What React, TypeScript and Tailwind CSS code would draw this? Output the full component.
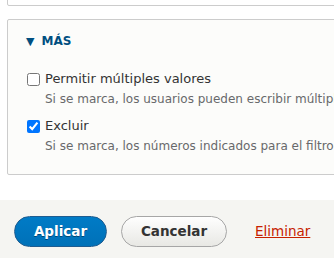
import React from 'react';

const font = { fontFamily: '"DejaVu Sans", "Liberation Sans", sans-serif' };

function CheckItem({ label, description, checked }: { label: string; description: string; checked?: boolean }) {
  return (
    <div className="flex flex-col">
      <label className="flex items-center gap-[5px] text-[13px] leading-[18px] text-[#333]">
        <input
          type="checkbox"
          defaultChecked={checked}
          className="m-0 h-[13px] w-[13px] accent-[#0075ff]"
        />
        <span>{label}</span>
      </label>
      <div className="mt-[3px] whitespace-nowrap pl-[18px] text-[12px] leading-[16px] text-[#68696b]">
        {description}
      </div>
    </div>
  );
}

export default function App() {
  return (
    <div className="h-[258px] w-[334px] overflow-hidden bg-white" style={font}>
      <div className="-mt-[14px] ml-[7px] h-[20px] w-[340px] rounded-b-[2px] border border-[#ccc] bg-white" />

      <div className="ml-[7px] mt-[13px] h-[156px] w-[340px] rounded-[2px] border border-[#ccc] bg-[#fcfcfa]">
        <div className="flex items-center gap-[7px] pl-[18px] pt-[14px]">
          <span className="text-[11px] leading-none text-[#004f80]">▼</span>
          <span className="text-[12px] font-bold uppercase leading-[14px] text-[#004f80]">Más</span>
        </div>

        <div className="flex flex-col gap-[10px] pl-[19px] pt-[22px]">
          <CheckItem
            label="Permitir múltiples valores"
            description="Si se marca, los usuarios pueden escribir múltiples valores."
          />
          <CheckItem
            checked
            label="Excluir"
            description="Si se marca, los números indicados para el filtro serán excluidos."
          />
        </div>
      </div>

      <div className="mt-[25px] flex h-[58px] items-start gap-[14px] bg-[#f5f5f2] pl-[14px] pt-[16px]">
        <button className="h-[31px] w-[93px] rounded-full border border-[#1e5c90] bg-gradient-to-b from-[#007bc6] to-[#0071b8] text-[13.5px] font-bold text-white [text-shadow:0_1px_0_rgba(0,0,0,0.4)]">
          Aplicar
        </button>
        <button className="h-[31px] w-[106px] rounded-full border border-[#a6a6a6] bg-gradient-to-b from-[#fefefe] to-[#e8e8e4] text-[13.5px] font-bold text-[#333]">
          Cancelar
        </button>
        <a href="#" className="ml-[14px] mt-[6px] text-[13.5px] leading-[18px] text-[#c72100] underline">
          Eliminar
        </a>
      </div>
    </div>
  );
}
